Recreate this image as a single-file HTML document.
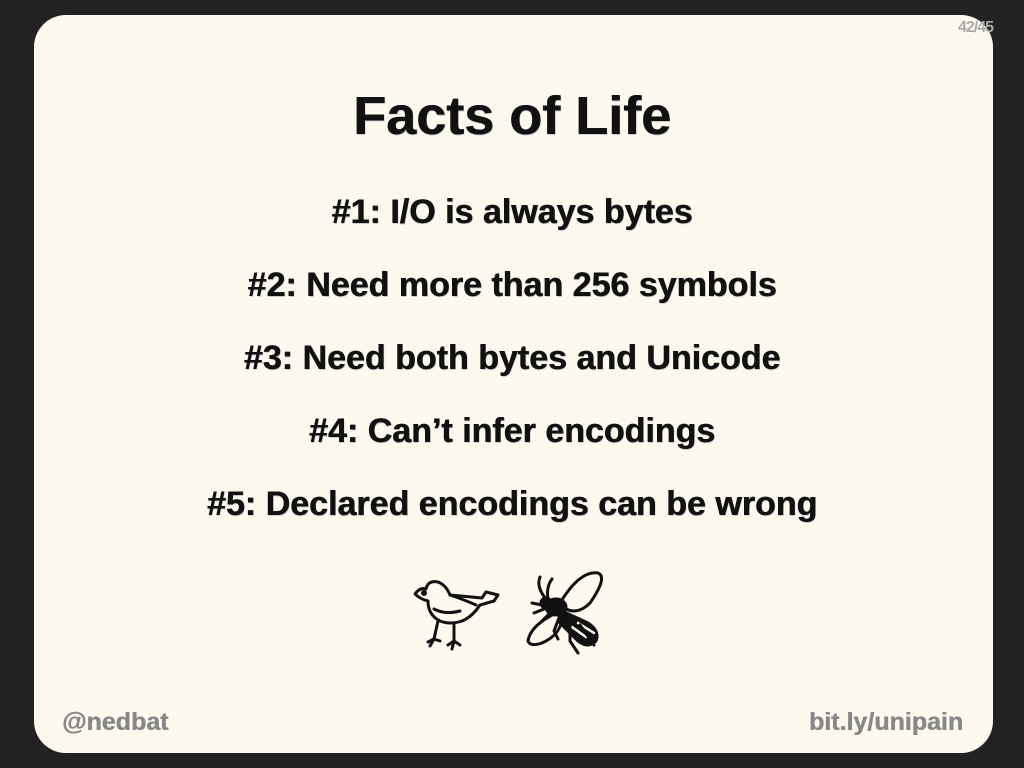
<!DOCTYPE html>
<html><head><meta charset="utf-8"><style>
html,body{margin:0;padding:0;}
body{width:1024px;height:768px;background:#222;position:relative;overflow:hidden;font-family:"Liberation Sans",Arial,sans-serif;}
.card{position:absolute;left:34px;top:15px;width:959px;height:738px;background:#fdf9ef;border-radius:32px;}
.t{position:absolute;left:0;width:1024px;text-align:center;font-weight:bold;color:#111;line-height:1;white-space:nowrap;text-shadow:0.6px 0 0 #111,1px 1px 0 #ccc;}
.l{font-size:34px;}
.pg{position:absolute;left:958px;top:19px;font-size:16px;color:#aaa;font-weight:bold;letter-spacing:-1px;}
.ft{position:absolute;font-size:25px;font-weight:bold;color:#888;line-height:1;text-shadow:0.5px 0 0 #888;}
</style></head><body>
<div class="card"></div>
<div class="pg">42/45</div>
<div class="t" style="top:89px;font-size:54px;">Facts of Life</div>
<div class="t l" style="top:195px;">#1: I/O is always bytes</div>
<div class="t l" style="top:268px;">#2: Need more than 256 symbols</div>
<div class="t l" style="top:341px;">#3: Need both bytes and Unicode</div>
<div class="t l" style="top:414px;">#4: Can’t infer encodings</div>
<div class="t l" style="top:487px;">#5: Declared encodings can be wrong</div>
<svg style="position:absolute;left:410px;top:565px" width="210" height="95" viewBox="0 0 210 95" fill="none" stroke="#111" stroke-width="3" stroke-linecap="round" stroke-linejoin="round">
  <path d="M5 29 Q10 22 16 24 Q18 15 28 17 Q36 20 40 30 L72 33 L76 27 L88 30 L84 36 L70 40 Q62 52 52 56 Q40 60 30 56 Q18 50 18 36 Q10 34 5 29Z"/>
  <path d="M40 30 Q55 35 66 40"/>
  <path d="M24 44 Q35 50 50 46"/>
  <circle cx="14" cy="28" r="1.5" fill="#111"/>
  <path d="M28 56 L24 74 M18 77 L24 74 L30 76 M24 74 L20 81"/>
  <path d="M44 58 L44 76 M38 80 L44 76 L50 80 M44 76 L42 84"/>
  <path d="M152 46 L178 58 Q190 66 186 76 Q178 84 168 76 L150 58Z" fill="#111"/>
  <path d="M162 62 L176 72 M168 58 L184 68" stroke="#fdf9ef" stroke-width="2.5"/>
  <ellipse cx="146" cy="42" rx="10" ry="8" fill="#111"/>
  <circle cx="136" cy="38" r="5" fill="#111"/>
  <path d="M150 38 Q170 5 188 8 Q198 12 180 38 Q168 50 156 44"/>
  <path d="M142 50 Q120 62 118 76 Q120 82 132 78 Q150 70 152 54"/>
  <path d="M136 34 Q126 22 130 12 M138 34 Q136 22 142 14"/>
  <path d="M140 48 L130 58 M150 50 L144 66 L148 74 M160 54 L160 76 L168 88 M170 60 L184 80"/>
  <path d="M132 40 L122 38 M134 44 L124 48"/>
</svg>
<div class="ft" style="left:62px;top:710px;">@nedbat</div>
<div class="ft" style="right:61px;top:710px;">bit.ly/unipain</div>
</body></html>
